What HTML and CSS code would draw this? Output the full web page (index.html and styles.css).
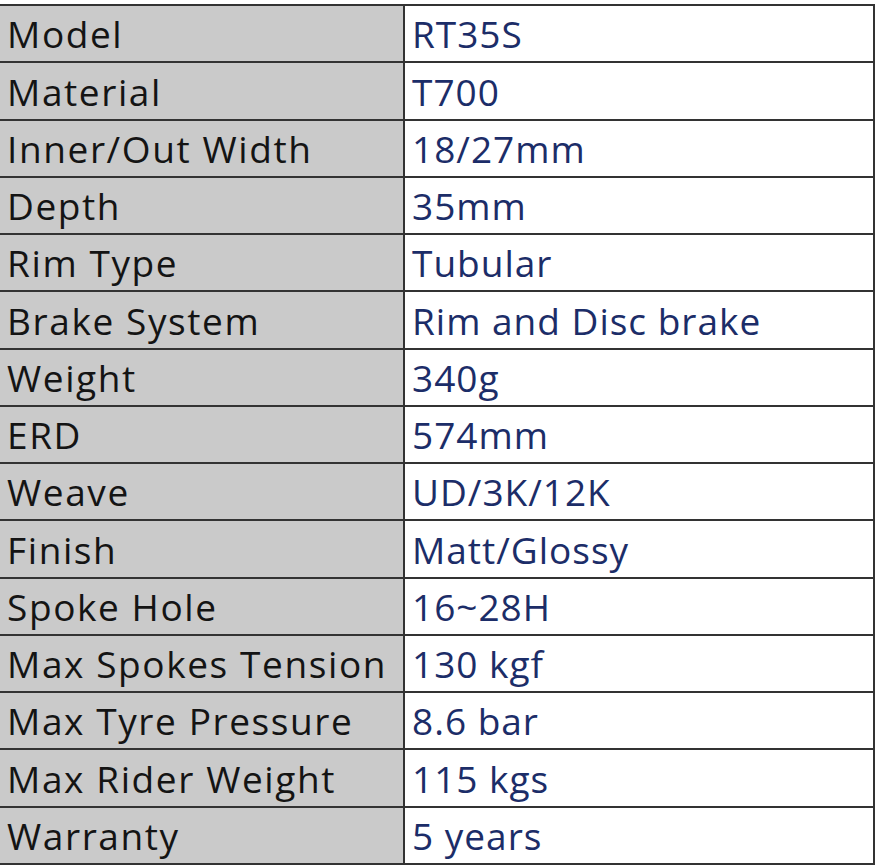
FILE: index.html
```html
<!DOCTYPE html>
<html>
<head>
<meta charset="utf-8">
<link rel="stylesheet" href="styles.css">
</head>
<body>
<table class="spec">
  <tr><td class="k">Model</td><td class="v">RT35S</td></tr>
  <tr><td class="k">Material</td><td class="v">T700</td></tr>
  <tr><td class="k">Inner/Out Width</td><td class="v">18/27mm</td></tr>
  <tr><td class="k">Depth</td><td class="v">35mm</td></tr>
  <tr><td class="k">Rim Type</td><td class="v">Tubular</td></tr>
  <tr><td class="k">Brake System</td><td class="v">Rim and Disc brake</td></tr>
  <tr><td class="k">Weight</td><td class="v">340g</td></tr>
  <tr><td class="k">ERD</td><td class="v">574mm</td></tr>
  <tr><td class="k">Weave</td><td class="v">UD/3K/12K</td></tr>
  <tr><td class="k">Finish</td><td class="v">Matt/Glossy</td></tr>
  <tr><td class="k">Spoke Hole</td><td class="v">16~28H</td></tr>
  <tr><td class="k">Max Spokes Tension</td><td class="v">130 kgf</td></tr>
  <tr><td class="k">Max Tyre Pressure</td><td class="v">8.6 bar</td></tr>
  <tr><td class="k">Max Rider Weight</td><td class="v">115 kgs</td></tr>
  <tr><td class="k">Warranty</td><td class="v">5 years</td></tr>
</table>
</body>
</html>
```
FILE: styles.css
```css
html, body {
  margin: 0;
  padding: 0;
  background: #ffffff;
}

.spec {
  border-collapse: collapse;
  margin: 4px 0 0 -2px;
  width: 877px;
  height: 861px;
  font-family: "Open Sans", "Lato", sans-serif;
  font-size: 37px;
  letter-spacing: 1px;
}

.spec td {
  border: 2px solid #333333;
  padding: 0 0 9px 7px;
  vertical-align: bottom;
  white-space: nowrap;
  line-height: 1;
}

.spec .k {
  width: 396px;
  background: #cacaca;
  color: #141414;
  letter-spacing: 1.6px;
}

.spec .v {
  background: #ffffff;
  color: #1c2d68;
}
```
